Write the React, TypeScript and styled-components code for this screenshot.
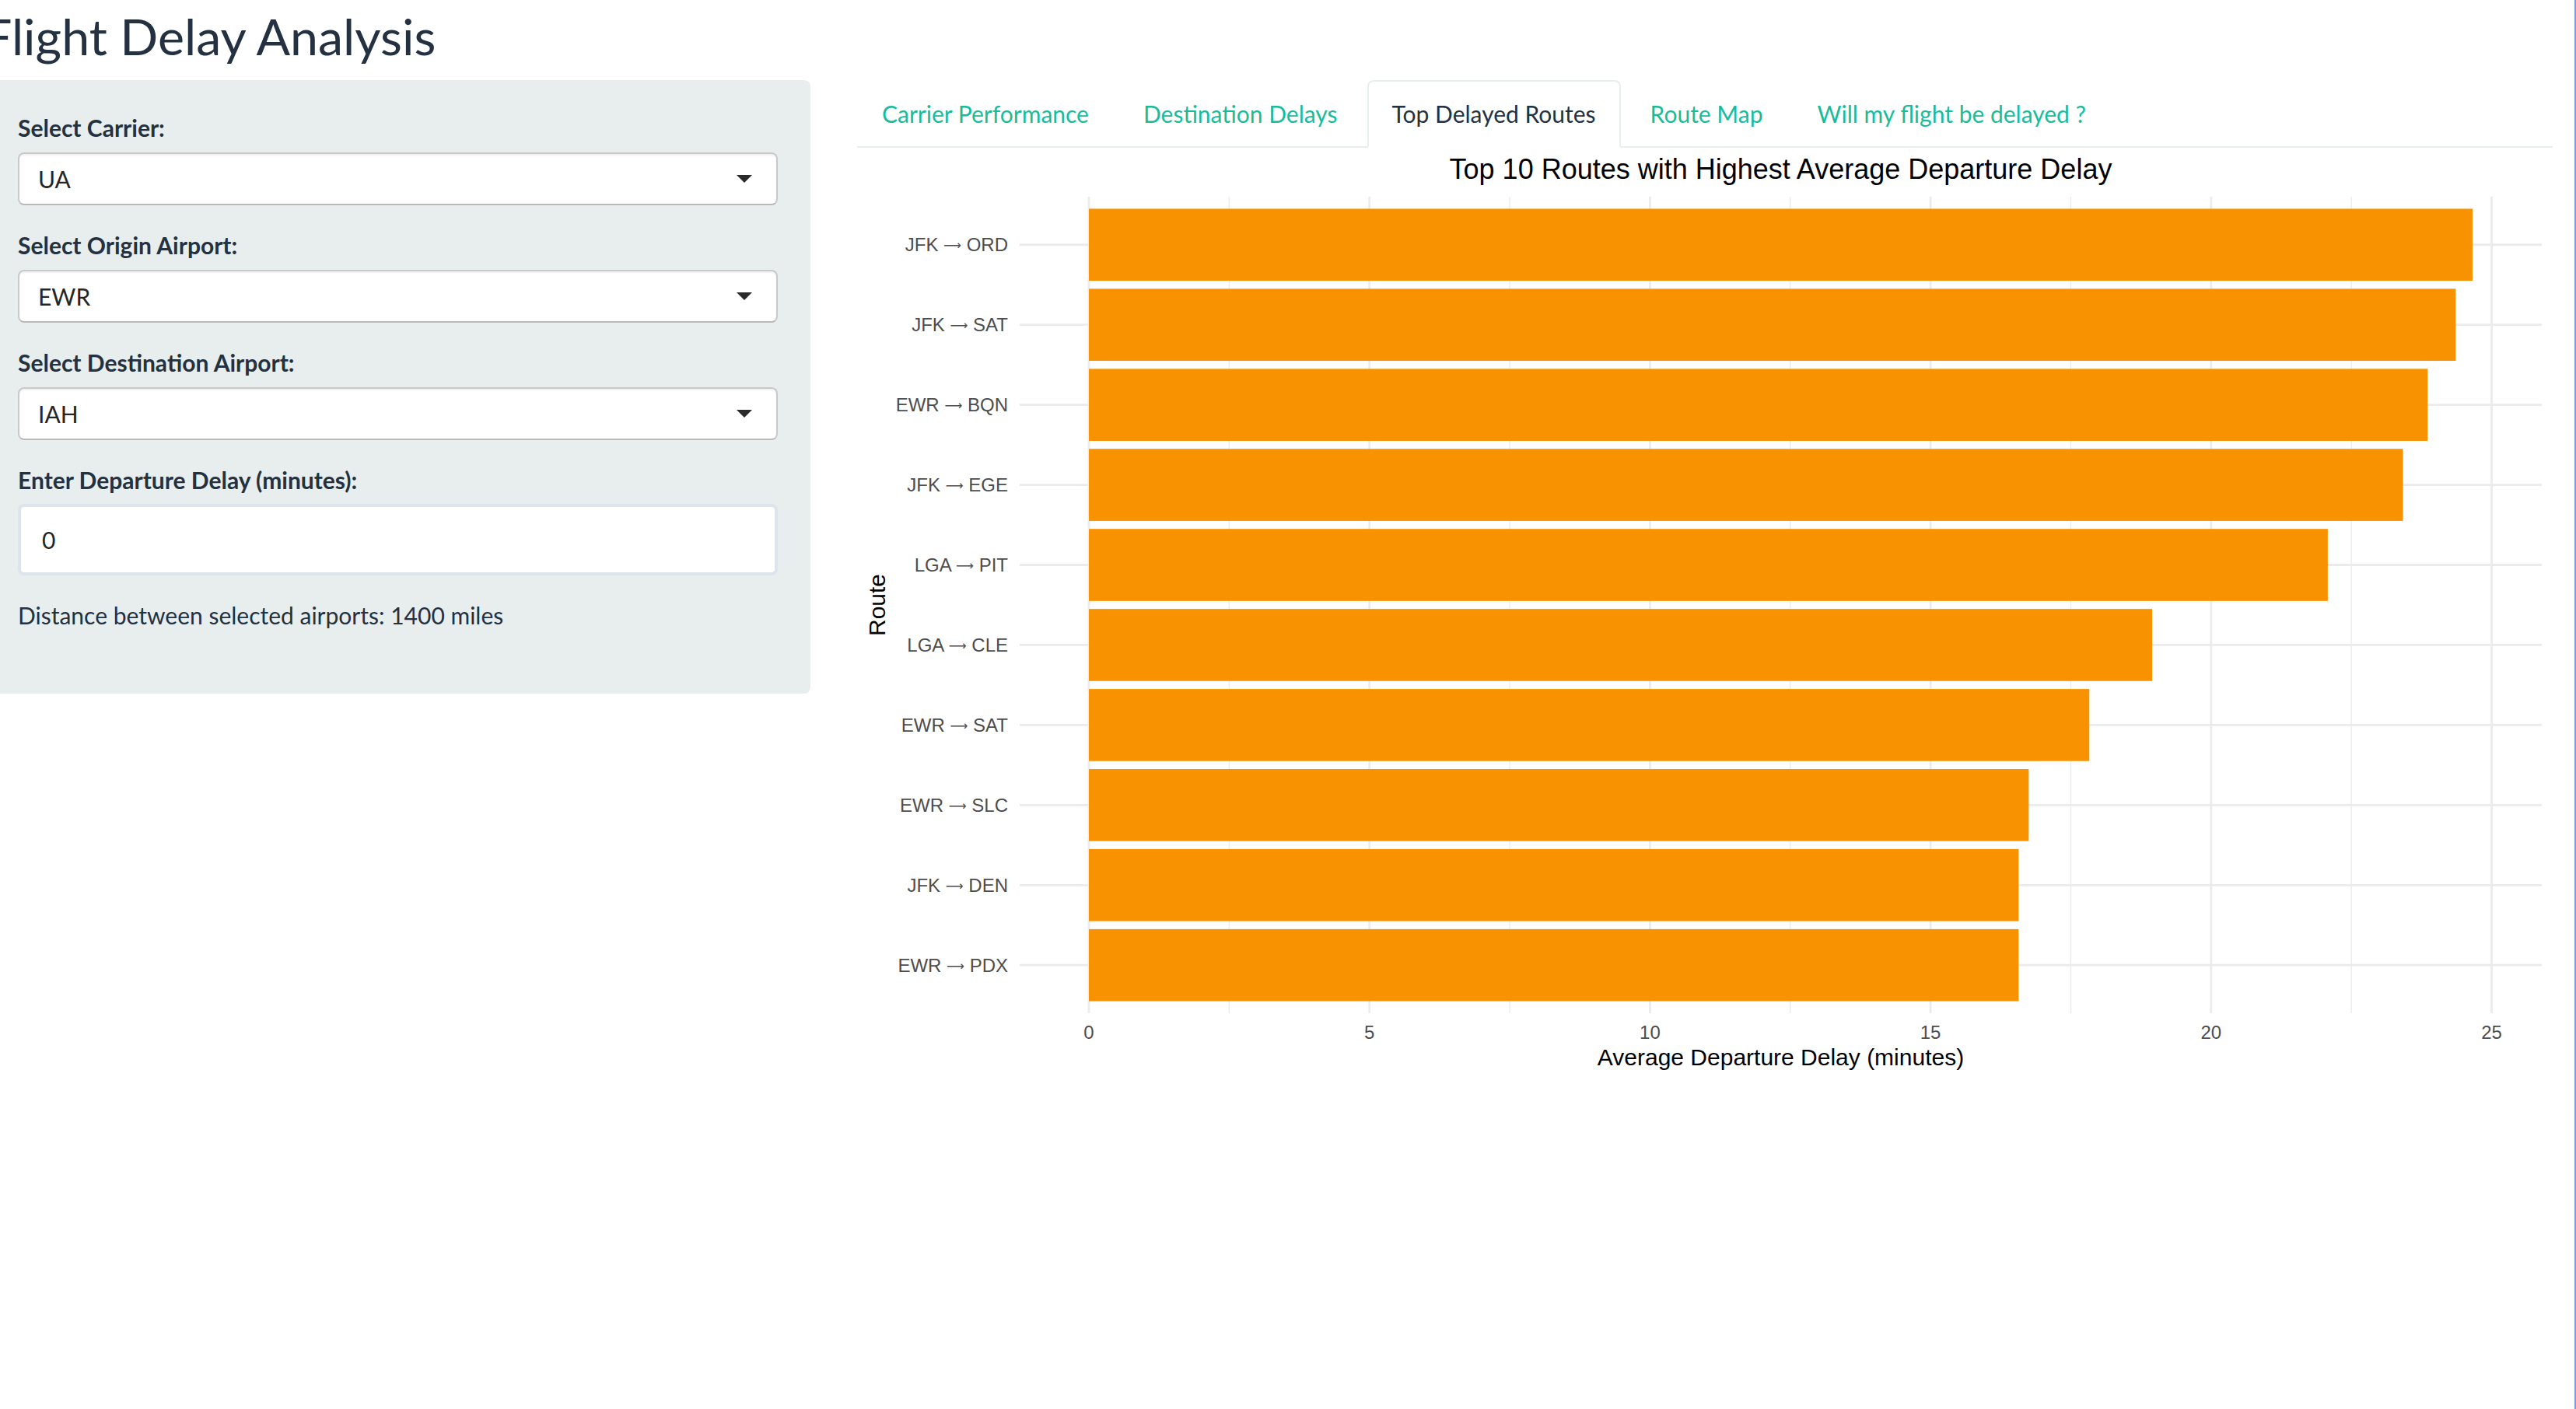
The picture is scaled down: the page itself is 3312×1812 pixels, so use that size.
import React from "react";
import styled, { createGlobalStyle } from "styled-components";

const GlobalStyle = createGlobalStyle`
  html, body { margin: 0; padding: 0; background: #ffffff; }
  body { font-family: Lato, "Open Sans", "Liberation Sans", sans-serif; color: #2c3e50; }
  * { box-sizing: border-box; }
`;

const Frame = styled.div`
  width: 100vw;
  height: 100vh;
  overflow: hidden;
  border-right: 2px solid #7f9bd9;
`;

const Page = styled.div`
  width: 3360px;
  margin-left: -48px;
  padding: 0 30px;
`;

const Title = styled.h2`
  margin: 0 0 0 -3px;
  padding-top: 6px;
  font-size: 64.5px;
  font-weight: 400;
  line-height: 80px;
  color: #233140;
`;

const Row = styled.div`
  display: grid;
  grid-template-columns: 1120px 2240px;
  margin: 17px -30px 0;
  align-items: start;
`;

const Column = styled.div`
  padding: 0 30px;
`;

const Well = styled.div`
  background: #e8eeee;
  border-radius: 8px;
  padding: 40px 42px 41px 41px;
`;

const FormGroup = styled.div`
  margin-bottom: 30px;
`;

const Label = styled.label`
  display: block;
  font-size: 30px;
  font-weight: 700;
  line-height: 42.86px;
  margin-bottom: 10px;
  color: #233140;
`;

const SelectBox = styled.div`
  height: 68px;
  display: flex;
  align-items: center;
  justify-content: space-between;
  padding: 0 31px 0 24px;
  background: #ffffff;
  border: 2px solid #c9c9c9;
  border-bottom-color: #b9b9b9;
  border-radius: 8px;
  box-shadow: inset 0 2px 2px rgba(0, 0, 0, 0.06);
  font-size: 30px;
  color: #262626;
`;

const Caret = styled.span`
  width: 0;
  height: 0;
  border-left: 10px solid transparent;
  border-right: 10px solid transparent;
  border-top: 10px solid #2a2a2a;
`;

const NumberInput = styled.input`
  display: block;
  width: 100%;
  height: 92px;
  margin-top: 3px;
  padding: 0 27px;
  border: 4px solid #dce4ec;
  border-radius: 8px;
  background: #ffffff;
  font-family: Lato, "Open Sans", sans-serif;
  font-size: 30px;
  color: #262626;
  outline: none;
`;

const InfoText = styled.div`
  font-size: 30px;
  line-height: 42.86px;
  color: #233140;
  margin-bottom: 38px;
`;

const TabList = styled.ul`
  display: flex;
  margin: 0;
  padding: 0;
  list-style: none;
  border-bottom: 2px solid #e8eeee;
`;

const Tab = styled.li<{ $active?: boolean }>`
  margin: 0 6px -2px 0;
  padding: 20px 30px;
  border: 2px solid ${(p) => (p.$active ? "#e8eeee" : "transparent")};
  border-bottom-color: ${(p) => (p.$active ? "#ffffff" : "transparent")};
  border-radius: 8px 8px 0 0;
  background: ${(p) => (p.$active ? "#ffffff" : "transparent")};
  font-size: 30px;
  line-height: 42.86px;
  color: ${(p) => (p.$active ? "#233140" : "#18bc9c")};
  white-space: nowrap;
`;

const PlotSvg = styled.svg`
  display: block;
  font-family: "Liberation Sans", Arial, sans-serif;
`;

const routes: [string, string, number][] = [
  ["JFK", "ORD", 24.66],
  ["JFK", "SAT", 24.36],
  ["EWR", "BQN", 23.86],
  ["JFK", "EGE", 23.42],
  ["LGA", "PIT", 22.08],
  ["LGA", "CLE", 18.95],
  ["EWR", "SAT", 17.83],
  ["EWR", "SLC", 16.75],
  ["JFK", "DEN", 16.57],
  ["EWR", "PDX", 16.57],
];

const PANEL_L = 209;
const PANEL_R = 2166;
const PANEL_T = 63;
const PANEL_B = 1113;
const X0 = 298;
const XS = 72.14;
const BAND = 102.94;
const xOf = (v: number) => X0 + v * XS;
const yOf = (i: number) => PANEL_T + (0.6 + i) * BAND;

function Chart() {
  const majors = [0, 5, 10, 15, 20, 25];
  const minors = [2.5, 7.5, 12.5, 17.5, 22.5];
  return (
    <PlotSvg width={2180} height={1200} viewBox="0 0 2180 1200">
      <text x={1187.5} y={40} fontSize={36} textAnchor="middle" fill="#000">
        Top 10 Routes with Highest Average Departure Delay
      </text>
      {minors.map((v) => (
        <line key={"mi" + v} x1={xOf(v)} x2={xOf(v)} y1={PANEL_T} y2={PANEL_B} stroke="#ebebeb" strokeWidth={1.4} />
      ))}
      {majors.map((v) => (
        <line key={"ma" + v} x1={xOf(v)} x2={xOf(v)} y1={PANEL_T} y2={PANEL_B} stroke="#ebebeb" strokeWidth={2.8} />
      ))}
      {routes.map((r, i) => (
        <line key={"h" + i} x1={PANEL_L} x2={PANEL_R} y1={yOf(i)} y2={yOf(i)} stroke="#ebebeb" strokeWidth={2.8} />
      ))}
      {routes.map((r, i) => (
        <rect key={"b" + i} x={X0} y={yOf(i) - 46.32} width={r[2] * XS} height={92.64} fill="#f99200" />
      ))}
      {routes.map((r, i) => (
        <text key={"l" + i} x={194} y={yOf(i) + 8.6} fontSize={24} textAnchor="end" fill="#4d4d4d">
          {r[0] + " "}
          <tspan fontFamily="DejaVu Sans" fontSize={16} dy={-2}>
            ⟶
          </tspan>
          <tspan dy={2}>{" " + r[1]}</tspan>
        </text>
      ))}
      {majors.map((v) => (
        <text key={"t" + v} x={xOf(v)} y={1146} fontSize={24} textAnchor="middle" fill="#4d4d4d">
          {v}
        </text>
      ))}
      <text x={1187.5} y={1180} fontSize={30} textAnchor="middle" fill="#000">
        Average Departure Delay (minutes)
      </text>
      <text x={36} y={588} fontSize={30} textAnchor="middle" fill="#000" transform="rotate(-90 36 588)">
        Route
      </text>
    </PlotSvg>
  );
}

export default function App() {
  const tabs = ["Carrier Performance", "Destination Delays", "Top Delayed Routes", "Route Map", "Will my flight be delayed ?"];
  return (
    <>
      <GlobalStyle />
      <Frame>
        <Page>
          <Title>Flight Delay Analysis</Title>
          <Row>
            <Column>
              <Well>
                <FormGroup>
                  <Label>Select Carrier:</Label>
                  <SelectBox>
                    <span>UA</span>
                    <Caret />
                  </SelectBox>
                </FormGroup>
                <FormGroup>
                  <Label>Select Origin Airport:</Label>
                  <SelectBox>
                    <span>EWR</span>
                    <Caret />
                  </SelectBox>
                </FormGroup>
                <FormGroup>
                  <Label>Select Destination Airport:</Label>
                  <SelectBox>
                    <span>IAH</span>
                    <Caret />
                  </SelectBox>
                </FormGroup>
                <FormGroup>
                  <Label>Enter Departure Delay (minutes):</Label>
                  <NumberInput type="text" defaultValue="0" readOnly />
                </FormGroup>
                <InfoText>Distance between selected airports: 1400 miles</InfoText>
              </Well>
            </Column>
            <Column>
              <TabList>
                {tabs.map((t) => (
                  <Tab key={t} $active={t === "Top Delayed Routes"}>
                    {t}
                  </Tab>
                ))}
              </TabList>
              <Chart />
            </Column>
          </Row>
        </Page>
      </Frame>
    </>
  );
}
